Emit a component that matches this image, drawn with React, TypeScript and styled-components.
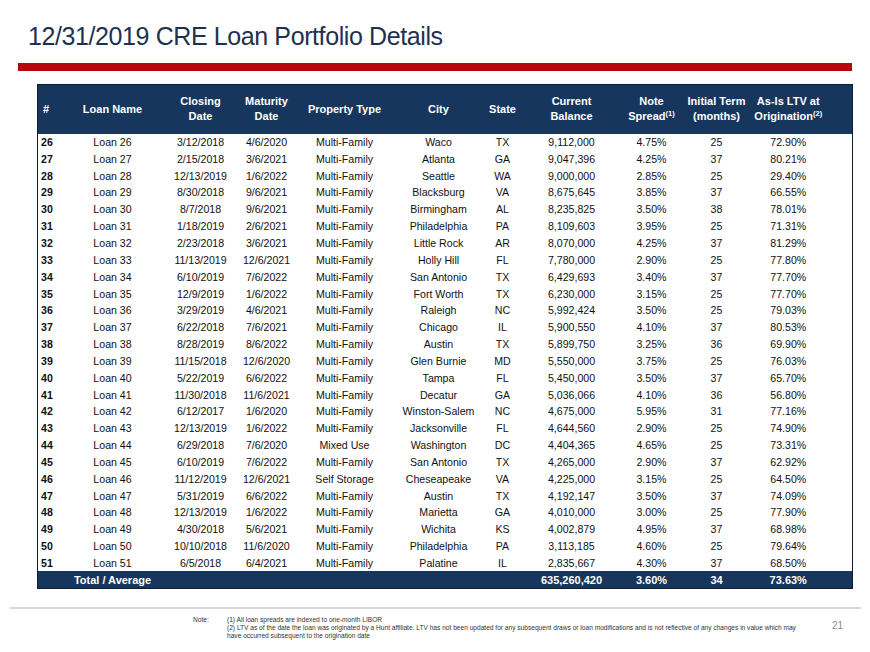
import React from 'react'
import styled, { createGlobalStyle } from 'styled-components'

const GlobalStyle = createGlobalStyle`
  html, body {
    margin: 0;
    padding: 0;
    background: #ffffff;
  }
  body {
    font-family: "Liberation Sans", Arial, sans-serif;
  }
`

type Loan = [string, string, string, string, string, string, string, string, string, string, string]

const loans: Loan[] = [
    ['26', 'Loan 26', '3/12/2018', '4/6/2020', 'Multi-Family', 'Waco', 'TX', '9,112,000', '4.75%', '25', '72.90%'],
    ['27', 'Loan 27', '2/15/2018', '3/6/2021', 'Multi-Family', 'Atlanta', 'GA', '9,047,396', '4.25%', '37', '80.21%'],
    ['28', 'Loan 28', '12/13/2019', '1/6/2022', 'Multi-Family', 'Seattle', 'WA', '9,000,000', '2.85%', '25', '29.40%'],
    ['29', 'Loan 29', '8/30/2018', '9/6/2021', 'Multi-Family', 'Blacksburg', 'VA', '8,675,645', '3.85%', '37', '66.55%'],
    ['30', 'Loan 30', '8/7/2018', '9/6/2021', 'Multi-Family', 'Birmingham', 'AL', '8,235,825', '3.50%', '38', '78.01%'],
    ['31', 'Loan 31', '1/18/2019', '2/6/2021', 'Multi-Family', 'Philadelphia', 'PA', '8,109,603', '3.95%', '25', '71.31%'],
    ['32', 'Loan 32', '2/23/2018', '3/6/2021', 'Multi-Family', 'Little Rock', 'AR', '8,070,000', '4.25%', '37', '81.29%'],
    ['33', 'Loan 33', '11/13/2019', '12/6/2021', 'Multi-Family', 'Holly Hill', 'FL', '7,780,000', '2.90%', '25', '77.80%'],
    ['34', 'Loan 34', '6/10/2019', '7/6/2022', 'Multi-Family', 'San Antonio', 'TX', '6,429,693', '3.40%', '37', '77.70%'],
    ['35', 'Loan 35', '12/9/2019', '1/6/2022', 'Multi-Family', 'Fort Worth', 'TX', '6,230,000', '3.15%', '25', '77.70%'],
    ['36', 'Loan 36', '3/29/2019', '4/6/2021', 'Multi-Family', 'Raleigh', 'NC', '5,992,424', '3.50%', '25', '79.03%'],
    ['37', 'Loan 37', '6/22/2018', '7/6/2021', 'Multi-Family', 'Chicago', 'IL', '5,900,550', '4.10%', '37', '80.53%'],
    ['38', 'Loan 38', '8/28/2019', '8/6/2022', 'Multi-Family', 'Austin', 'TX', '5,899,750', '3.25%', '36', '69.90%'],
    ['39', 'Loan 39', '11/15/2018', '12/6/2020', 'Multi-Family', 'Glen Burnie', 'MD', '5,550,000', '3.75%', '25', '76.03%'],
    ['40', 'Loan 40', '5/22/2019', '6/6/2022', 'Multi-Family', 'Tampa', 'FL', '5,450,000', '3.50%', '37', '65.70%'],
    ['41', 'Loan 41', '11/30/2018', '11/6/2021', 'Multi-Family', 'Decatur', 'GA', '5,036,066', '4.10%', '36', '56.80%'],
    ['42', 'Loan 42', '6/12/2017', '1/6/2020', 'Multi-Family', 'Winston-Salem', 'NC', '4,675,000', '5.95%', '31', '77.16%'],
    ['43', 'Loan 43', '12/13/2019', '1/6/2022', 'Multi-Family', 'Jacksonville', 'FL', '4,644,560', '2.90%', '25', '74.90%'],
    ['44', 'Loan 44', '6/29/2018', '7/6/2020', 'Mixed Use', 'Washington', 'DC', '4,404,365', '4.65%', '25', '73.31%'],
    ['45', 'Loan 45', '6/10/2019', '7/6/2022', 'Multi-Family', 'San Antonio', 'TX', '4,265,000', '2.90%', '37', '62.92%'],
    ['46', 'Loan 46', '11/12/2019', '12/6/2021', 'Self Storage', 'Cheseapeake', 'VA', '4,225,000', '3.15%', '25', '64.50%'],
    ['47', 'Loan 47', '5/31/2019', '6/6/2022', 'Multi-Family', 'Austin', 'TX', '4,192,147', '3.50%', '37', '74.09%'],
    ['48', 'Loan 48', '12/13/2019', '1/6/2022', 'Multi-Family', 'Marietta', 'GA', '4,010,000', '3.00%', '25', '77.90%'],
    ['49', 'Loan 49', '4/30/2018', '5/6/2021', 'Multi-Family', 'Wichita', 'KS', '4,002,879', '4.95%', '37', '68.98%'],
    ['50', 'Loan 50', '10/10/2018', '11/6/2020', 'Multi-Family', 'Philadelphia', 'PA', '3,113,185', '4.60%', '25', '79.64%'],
    ['51', 'Loan 51', '6/5/2018', '6/4/2021', 'Multi-Family', 'Palatine', 'IL', '2,835,667', '4.30%', '37', '68.50%'],
]

// column widths, they add up to the 815px of the table
const widths = [25, 100, 76, 56, 100, 88, 40, 98, 62, 68, 102]

const App = () => {
    return <Page>
        <GlobalStyle />
        <Title>12/31/2019 CRE Loan Portfolio Details</Title>
        <RedBar />
        <Table>
            <colgroup>
                {widths.map((w, i) => <col key={i} style={{ width: w }} />)}
            </colgroup>
            <thead>
                <HeadRow>
                    <HeadCell $first>#</HeadCell>
                    <HeadCell>Loan Name</HeadCell>
                    <HeadCell>Closing<br />Date</HeadCell>
                    <HeadCell>Maturity<br />Date</HeadCell>
                    <HeadCell>Property Type</HeadCell>
                    <HeadCell>City</HeadCell>
                    <HeadCell>State</HeadCell>
                    <HeadCell>Current<br />Balance</HeadCell>
                    <HeadCell>Note<br />Spread<Sup>(1)</Sup></HeadCell>
                    <HeadCell>Initial Term<br />(months)</HeadCell>
                    <HeadCell $last>As-Is LTV at<br />Origination<Sup>(2)</Sup></HeadCell>
                </HeadRow>
            </thead>
            <tbody>
                {loans.map(row => (
                    <BodyRow key={row[0]}>
                        {row.map((v, i) => (
                            <Cell key={i} $first={i === 0} $last={i === row.length - 1}>{v}</Cell>
                        ))}
                    </BodyRow>
                ))}
                <TotalRow>
                    <TotalCell />
                    <TotalCell>Total / Average</TotalCell>
                    <TotalCell />
                    <TotalCell />
                    <TotalCell />
                    <TotalCell />
                    <TotalCell />
                    <TotalCell>635,260,420</TotalCell>
                    <TotalCell>3.60%</TotalCell>
                    <TotalCell>34</TotalCell>
                    <TotalCell $last>73.63%</TotalCell>
                </TotalRow>
            </tbody>
        </Table>
        <Rule />
        <Footer>
            <NoteLabel>Note:</NoteLabel>
            <Notes>
                <NoteLine>(1) All loan spreads are indexed to one-month LIBOR</NoteLine>
                <NoteLine>(2) LTV as of the date the loan was originated by a Hunt affiliate. LTV has not been updated for any subsequent draws or loan modifications and is not reflective of any changes in value which may</NoteLine>
                <NoteLine>have occurred subsequent to the origination date</NoteLine>
            </Notes>
            <PageNumber>21</PageNumber>
        </Footer>
    </Page>
}

const Page = styled.div`
    width: 870px;
    height: 652px;
    padding-top: 21px;
    box-sizing: border-box;
    overflow: hidden;
`

const Title = styled.h1`
    margin: 0 0 0 28px;
    font-family: "Liberation Sans", Arial, sans-serif;
    font-weight: normal;
    font-size: 25px;
    line-height: 30px;
    letter-spacing: -0.4px;
    color: #1e3151;
`

const RedBar = styled.div`
    height: 8px;
    margin: 12px 18px 0 18px;
    background: #b40a0a;
`

const Table = styled.table`
    margin: 13px 0 0 37px;
    width: 815px;
    table-layout: fixed;
    border-collapse: collapse;
    border: 1px solid #0e1c30;
    font-family: "Liberation Sans", Arial, sans-serif;
`

const HeadRow = styled.tr`
    height: 49px;
    background: #17365d;
`

const HeadCell = styled.th<{ $first?: boolean; $last?: boolean }>`
    padding: ${p => p.$last ? '0 26px 0 0' : p.$first ? '0 0 0 5px' : '0 2px'};
    text-align: ${p => p.$first ? 'left' : 'center'};
    font-size: 11px;
    line-height: 15px;
    font-weight: bold;
    color: #ffffff;
    white-space: nowrap;
`

const Sup = styled.sup`
    font-size: 7.5px;
    line-height: 0;
    vertical-align: 4px;
`

const BodyRow = styled.tr`
    height: 16.85px;
`

const Cell = styled.td<{ $first?: boolean; $last?: boolean }>`
    padding: ${p => p.$last ? '0 26px 0 0' : p.$first ? '0 0 0 3px' : '0'};
    text-align: ${p => p.$first ? 'left' : 'center'};
    font-size: 10.6px;
    line-height: 16px;
    font-weight: ${p => p.$first ? 'bold' : 'normal'};
    color: #111111;
    white-space: nowrap;
`

const TotalRow = styled.tr`
    height: 17px;
    background: #17365d;
`

const TotalCell = styled.td<{ $last?: boolean }>`
    padding: ${p => p.$last ? '0 26px 0 0' : '0'};
    text-align: center;
    font-size: 11px;
    line-height: 16px;
    font-weight: bold;
    color: #ffffff;
    white-space: nowrap;
`

const Rule = styled.div`
    height: 2px;
    margin: 18px 9px 0 10px;
    background: #d9d9d9;
`

const Footer = styled.div`
    display: flex;
    align-items: flex-start;
    margin-top: 7px;
    padding-left: 193px;
    font-family: "Liberation Sans", Arial, sans-serif;
`

const NoteLabel = styled.div`
    width: 34px;
    font-size: 6.6px;
    line-height: 8px;
    color: #333333;
`

const Notes = styled.div`
    display: flex;
    flex-direction: column;
`

const NoteLine = styled.div`
    font-size: 6.6px;
    line-height: 8px;
    color: #333333;
    white-space: nowrap;
`

const PageNumber = styled.div`
    margin-left: auto;
    padding: 4px 27px 0 0;
    font-size: 10px;
    line-height: 12px;
    color: #8c8c8c;
`

export default App
